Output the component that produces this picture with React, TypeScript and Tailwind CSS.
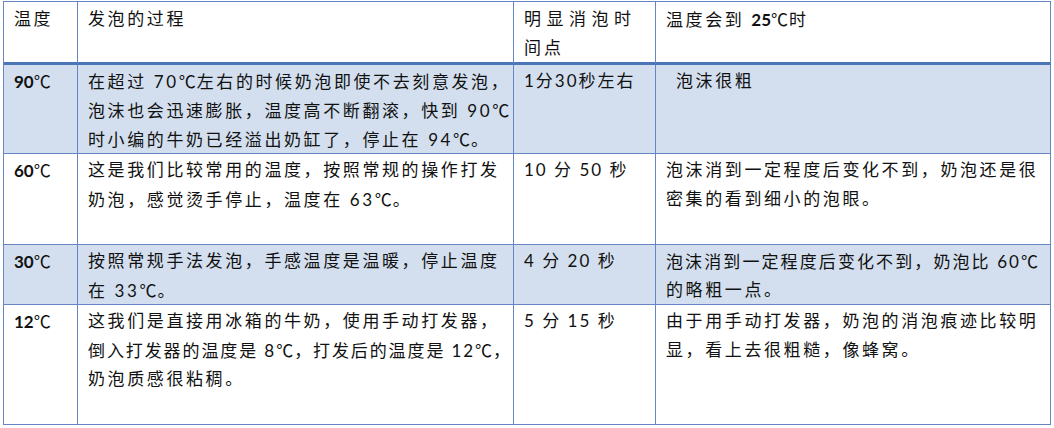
type Line = string | { t: string; cls: string };

const rows: {
  temp: string;
  band: boolean;
  h: string;
  process: Line[];
  time: string;
  result: Line[];
  indent?: boolean;
}[] = [
  {
    temp: '90',
    band: true,
    h: 'h-[89px]',
    process: ['在超过 70℃左右的时候奶泡即使不去刻意发泡，', '泡沫也会迅速膨胀，温度高不断翻滚，快到 90℃', '时小编的牛奶已经溢出奶缸了，停止在 94℃。'],
    time: '1分30秒左右',
    result: ['泡沫很粗'],
    indent: true,
  },
  {
    temp: '60',
    band: false,
    h: 'h-[91px]',
    process: ['这是我们比较常用的温度，按照常规的操作打发', '奶泡，感觉烫手停止，温度在 63℃。'],
    time: '10 分 50 秒',
    result: ['泡沫消到一定程度后变化不到，奶泡还是很', '密集的看到细小的泡眼。'],
  },
  {
    temp: '30',
    band: true,
    h: 'h-[60px]',
    process: ['按照常规手法发泡，手感温度是温暖，停止温度', '在 33℃。'],
    time: '4 分 20 秒',
    result: [{ t: '泡沫消到一定程度后变化不到，奶泡比 60℃', cls: 'tracking-[2.1px]' }, '的略粗一点。'],
  },
  {
    temp: '12',
    band: false,
    h: 'h-[120px]',
    process: [
      '这我们是直接用冰箱的牛奶，使用手动打发器，',
      { t: '倒入打发器的温度是 8℃，打发后的温度是 12℃，', cls: 'tracking-[1.9px]' },
      '奶泡质感很粘稠。',
    ],
    time: '5 分 15 秒',
    result: ['由于用手动打发器，奶泡的消泡痕迹比较明', '显，看上去很粗糙，像蜂窝。'],
  },
];

const cell = 'border-r border-b border-[#6586c3] pl-[10px] pt-[1px] overflow-visible';
const head = 'border-r border-b-[3px] border-r-[#6586c3] border-b-[#4a75b6] pl-[10px] pt-[2px]';

// degree sign from the CJK face
function T({ text }: { text: string }) {
  const parts = text.split('℃');
  return (
    <>
      {parts.map((p, i) => (
        <span key={i}>
          {p}
          {i < parts.length - 1 && <span className="font-['Noto_Sans_CJK_SC'] tracking-[1px]">℃</span>}
        </span>
      ))}
    </>
  );
}

function Lines({ items }: { items: Line[] }) {
  return (
    <>
      {items.map((l, i) => {
        const t = typeof l === 'string' ? l : l.t;
        const cls = typeof l === 'string' ? '' : l.cls;
        return (
          <div key={i} className={`h-[29px] whitespace-nowrap ${cls}`}>
            <T text={t} />
          </div>
        );
      })}
    </>
  );
}

export default function App() {
  return (
    <div
      className="bg-white w-[1054px] h-[428px] pl-[3px] pt-[1px] text-[#111] text-[17px] leading-[29px] tracking-[2.6px]"
      style={{ fontFamily: 'Lato, "Noto Sans CJK SC", sans-serif' }}
    >
      <div className="w-[1048px] border-l border-t border-[#6586c3] grid grid-cols-[74px_436px_142px_395px]">
        {/* header */}
        <div className={`${head} h-[63px]`}>
          <div className="h-[29px]">温度</div>
        </div>
        <div className={head}>
          <div className="h-[29px]">发泡的过程</div>
        </div>
        <div className={head}>
          <div className="h-[29px] tracking-[5.5px] whitespace-nowrap">明显消泡时</div>
          <div className="h-[29px] tracking-[3px]">间点</div>
        </div>
        <div className={head}>
          <div className="h-[29px] whitespace-nowrap">
            温度会到 <span className="font-bold tracking-normal">25</span>
            <T text="℃" />时
          </div>
        </div>

        {rows.map((r) => {
          const bg = r.band ? 'bg-[#d3dfee]' : 'bg-white';
          return (
            <div key={r.temp} className="contents">
              <div className={`${cell} ${bg} ${r.h}`}>
                <div className="h-[29px] whitespace-nowrap">
                  <span className="font-bold tracking-normal">{r.temp}</span>
                  <T text="℃" />
                </div>
              </div>
              <div className={`${cell} ${bg}`}>
                <Lines items={r.process} />
              </div>
              <div className={`${cell} ${bg}`}>
                <div className="h-[29px] whitespace-nowrap tracking-[2px]">{r.time}</div>
              </div>
              <div className={`${cell} ${bg}`}>
                <div className={r.indent ? 'pl-[10px]' : ''}>
                  <Lines items={r.result} />
                </div>
              </div>
            </div>
          );
        })}
      </div>
    </div>
  );
}
